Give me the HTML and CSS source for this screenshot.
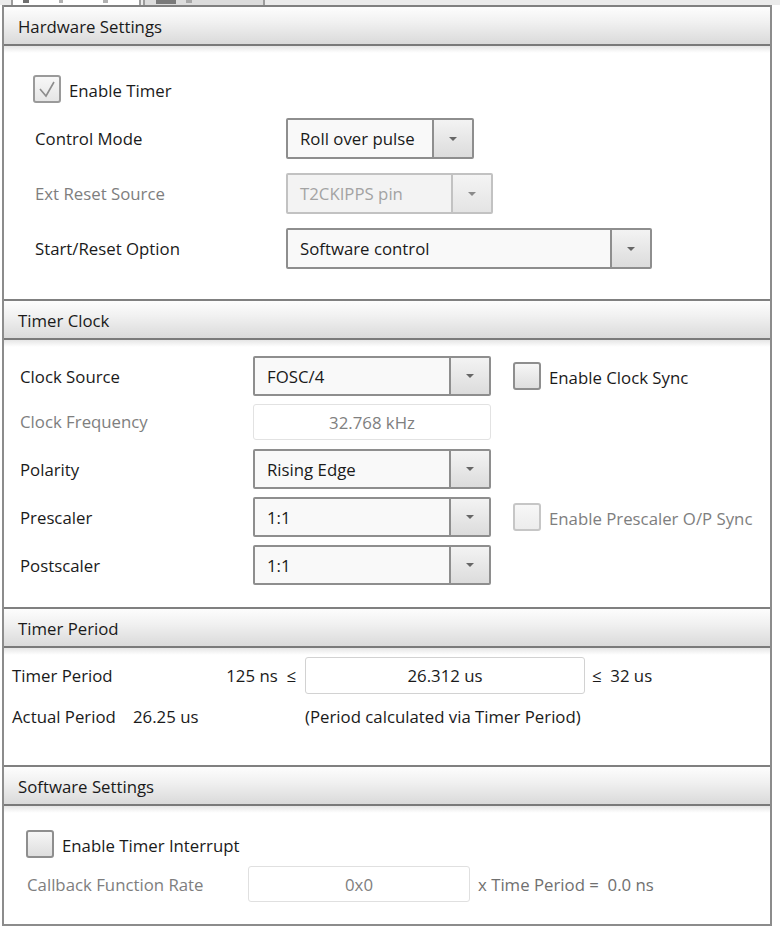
FILE: index.html
```html
<!DOCTYPE html>
<html>
<head>
<meta charset="utf-8">
<title>Timer</title>
<link rel="stylesheet" href="styles.css">
</head>
<body>
<div class="tabs">
  <div class="tab tab-active"><span class="frag f1"></span><span class="frag f2"></span><span class="frag f3"></span></div>
  <div class="tab tab-inactive"><span class="frag f4"></span><span class="frag f5"></span></div>
</div>
<div class="panel">
  <section class="sec">
    <div class="hdr">Hardware Settings</div>
    <div class="body body-hw">
      <div class="chk-row chk-row-hw">
        <span class="chk chk-on"><svg width="24" height="24" viewBox="0 0 24 24"><path d="M5 12 L11 19 L19 5" fill="none" stroke="#8c8c8c" stroke-width="1.6"/></svg></span>
        <span class="chk-text">Enable Timer</span>
      </div>
      <div class="row row-hw">
        <span class="lbl lbl-hw">Control Mode</span>
        <div class="combo combo-cm"><span class="combo-text">Roll over pulse</span><span class="combo-btn"><svg width="8" height="4" viewBox="0 0 8 4"><path d="M0 0 H8 L4 4 Z" fill="#666"/></svg></span></div>
      </div>
      <div class="row row-hw">
        <span class="lbl lbl-hw lbl-dis">Ext Reset Source</span>
        <div class="combo combo-ext combo-dis"><span class="combo-text">T2CKIPPS pin</span><span class="combo-btn"><svg width="8" height="4" viewBox="0 0 8 4"><path d="M0 0 H8 L4 4 Z" fill="#8a8a8a"/></svg></span></div>
      </div>
      <div class="row row-hw">
        <span class="lbl lbl-hw">Start/Reset Option</span>
        <div class="combo combo-sr"><span class="combo-text">Software control</span><span class="combo-btn"><svg width="8" height="4" viewBox="0 0 8 4"><path d="M0 0 H8 L4 4 Z" fill="#666"/></svg></span></div>
      </div>
    </div>
  </section>

  <section class="sec">
    <div class="hdr">Timer Clock</div>
    <div class="body body-clk">
      <div class="row row-clk">
        <span class="lbl lbl-clk">Clock Source</span>
        <div class="combo combo-clk"><span class="combo-text">FOSC/4</span><span class="combo-btn"><svg width="8" height="4" viewBox="0 0 8 4"><path d="M0 0 H8 L4 4 Z" fill="#666"/></svg></span></div>
        <span class="chk chk-side"></span>
        <span class="chk-text">Enable Clock Sync</span>
      </div>
      <div class="row row-freq">
        <span class="lbl lbl-clk lbl-dis">Clock Frequency</span>
        <div class="tbox tbox-freq">32.768 kHz</div>
      </div>
      <div class="row row-clk">
        <span class="lbl lbl-clk">Polarity</span>
        <div class="combo combo-clk"><span class="combo-text">Rising Edge</span><span class="combo-btn"><svg width="8" height="4" viewBox="0 0 8 4"><path d="M0 0 H8 L4 4 Z" fill="#666"/></svg></span></div>
      </div>
      <div class="row row-clk">
        <span class="lbl lbl-clk">Prescaler</span>
        <div class="combo combo-clk"><span class="combo-text">1:1</span><span class="combo-btn"><svg width="8" height="4" viewBox="0 0 8 4"><path d="M0 0 H8 L4 4 Z" fill="#666"/></svg></span></div>
        <span class="chk chk-side chk-dis"></span>
        <span class="chk-text lbl-dis">Enable Prescaler O/P Sync</span>
      </div>
      <div class="row row-clk">
        <span class="lbl lbl-clk">Postscaler</span>
        <div class="combo combo-clk"><span class="combo-text">1:1</span><span class="combo-btn"><svg width="8" height="4" viewBox="0 0 8 4"><path d="M0 0 H8 L4 4 Z" fill="#666"/></svg></span></div>
      </div>
    </div>
  </section>

  <section class="sec">
    <div class="hdr">Timer Period</div>
    <div class="body body-per">
      <div class="per-grid">
        <span class="per-lbl">Timer Period</span>
        <span class="per-min">125 ns &nbsp;&le;</span>
        <div class="tbox tbox-per">26.312 us</div>
        <span class="per-max">&le;&nbsp; 32 us</span>
        <span class="per-actual"><span class="per-actual-lbl">Actual Period</span>26.25 us</span>
        <span></span>
        <span class="per-note">(Period calculated via Timer Period)</span>
        <span></span>
      </div>
    </div>
  </section>

  <section class="sec">
    <div class="hdr">Software Settings</div>
    <div class="body body-sw">
      <div class="chk-row">
        <span class="chk"></span>
        <span class="chk-text">Enable Timer Interrupt</span>
      </div>
      <div class="row row-cb">
        <span class="lbl lbl-cb lbl-dis">Callback Function Rate</span>
        <div class="tbox tbox-cb">0x0</div>
        <span class="cb-note">x Time Period =  0.0 ns</span>
      </div>
    </div>
  </section>
</div>
</body>
</html>
```

FILE: styles.css
```css
* { box-sizing: border-box; }
html, body { margin: 0; padding: 0; background: #ffffff; }
body {
  width: 780px;
  height: 937px;
  overflow: hidden;
  font-family: "Open Sans", "Noto Sans", "DejaVu Sans", sans-serif;
  font-size: 16.8px;
  color: #1a1a1a;
}

/* tab strip (cut off at top) */
.tabs {
  height: 5px;
  background: #ebebeb;
  display: flex;
  padding-left: 11px;
  gap: 2px;
  overflow: hidden;
}
.tab {
  height: 5px;
  display: flex;
  align-items: flex-start;
  border-left: 2px solid #9c9c9c;
  border-right: 2px solid #9c9c9c;
}
.tab-active { width: 130px; background: #ffffff; }
.tab-inactive { width: 122px; background: #dcdcdc; }
.frag { display: block; height: 3px; background: #707070; }
.f1 { width: 6px; margin-left: 10px; }
.f2 { width: 4px; margin-left: 30px; background: #b0b0b0; }
.f3 { width: 5px; margin-left: 40px; background: #b0b0b0; }
.f4 { width: 20px; height: 4px; margin-left: 11px; background: #7a7a7a; }
.f5 { width: 6px; margin-left: 10px; background: #a8a8a8; }

/* panel */
.panel {
  margin-left: 2px;
  width: 770px;
  border-left: 2px solid #8c8c8c;
  border-right: 2px solid #8c8c8c;
  border-bottom: 2px solid #8c8c8c;
}
.hdr {
  height: 41px;
  border-top: 2px solid #808080;
  border-bottom: 2px solid #7a7a7a;
  background: linear-gradient(#fdfdfd, #f1f1f1 40%, #dadada);
  padding: 1px 0 0 14px;
  display: flex;
  align-items: center;
  color: #1a1a1a;
}
.body {
  background: linear-gradient(#e6e6e6, #ffffff 7px);
}

.row { display: flex; align-items: center; }
.lbl { flex: none; }
.lbl-dis { color: #7e7e7e; }

/* checkbox */
.chk {
  flex: none;
  width: 28px;
  height: 28px;
  border: 2px solid #8e8e8e;
  border-radius: 3px;
  background: linear-gradient(#f6f6f6, #dedede);
  display: flex;
  align-items: center;
  justify-content: center;
}
.chk-on { border-color: #9a9a9a; background: linear-gradient(#f7f7f7, #e6e6e6); }
.chk-dis {
  border-color: #c6c6c6;
  background: linear-gradient(#f7f7f7, #ececec);
}
.chk-row { display: flex; align-items: center; height: 28px; }
.chk-text { margin-left: 8px; padding-top: 2px; }

/* combo box */
.combo {
  flex: none;
  height: 40px;
  display: flex;
  border: 2px solid #8e8e8e;
  border-radius: 2px;
  background: #f9f9f9;
}
.combo-text {
  flex: 1;
  display: flex;
  align-items: center;
  padding-left: 12px;
  color: #1a1a1a;
}
.combo-btn {
  flex: none;
  width: 40px;
  border-left: 2px solid #8e8e8e;
  background: linear-gradient(#f3f3f3, #dcdcdc);
  display: flex;
  align-items: center;
  justify-content: center;
}
.combo-dis { border-color: #c2c2c2; background: #f3f3f3; }
.combo-dis .combo-text { color: #a3a3a3; }
.combo-dis .combo-btn { border-left-color: #c2c2c2; background: linear-gradient(#f4f4f4, #e4e4e4); }

/* text box */
.tbox {
  flex: none;
  border: 1px solid #dcdcdc;
  border-radius: 3px;
  background: #ffffff;
  display: flex;
  align-items: center;
  justify-content: center;
}

/* hardware section */
.body-hw { height: 253px; padding: 29px 0 0 31px; }
.chk-row-hw { margin-left: -2px; margin-bottom: 15px; }
.row-hw { height: 41px; margin-bottom: 14px; }
.row-hw .combo { height: 41px; }
.lbl-hw { width: 251px; }
.combo-cm { width: 188px; }
.combo-ext { width: 207px; }
.combo-sr { width: 366px; }

/* clock section */
.body-clk { height: 267px; padding: 16px 0 0 16px; }
.row-clk { height: 40px; margin-bottom: 8px; }
.row-freq { height: 37px; margin-bottom: 8px; align-items: flex-start; }
.row-freq .lbl { line-height: 36px; }
.lbl-clk { width: 233px; }
.combo-clk { width: 238px; }
.chk-side { margin-left: 22px; }
.tbox-freq { width: 238px; height: 36px; color: #808080; border-color: #e2e2e2; }

/* period section */
.body-per { height: 117px; padding: 9px 0 0 8px; }
.per-grid {
  display: grid;
  grid-template-columns: 212px 81px 280px auto;
  grid-template-rows: 37px 26px;
  row-gap: 9px;
  align-items: center;
}
.per-min { text-align: right; padding-right: 9px; white-space: nowrap; }
.tbox-per { height: 37px; border-color: #d2d2d2; }
.per-max { padding-left: 7px; white-space: nowrap; }
.per-actual { white-space: nowrap; }
.per-actual-lbl { display: inline-block; width: 121px; }
.per-note { white-space: nowrap; }

/* software section */
.body-sw { height: 118px; padding: 24px 0 0 22px; }
.row-cb { height: 36px; margin-top: 8px; }
.lbl-cb { width: 221px; margin-left: 1px; }
.tbox-cb { width: 222px; height: 36px; color: #808080; border-color: #e0e0e0; }
.cb-note { margin-left: 8px; color: #707070; white-space: pre; }
```
